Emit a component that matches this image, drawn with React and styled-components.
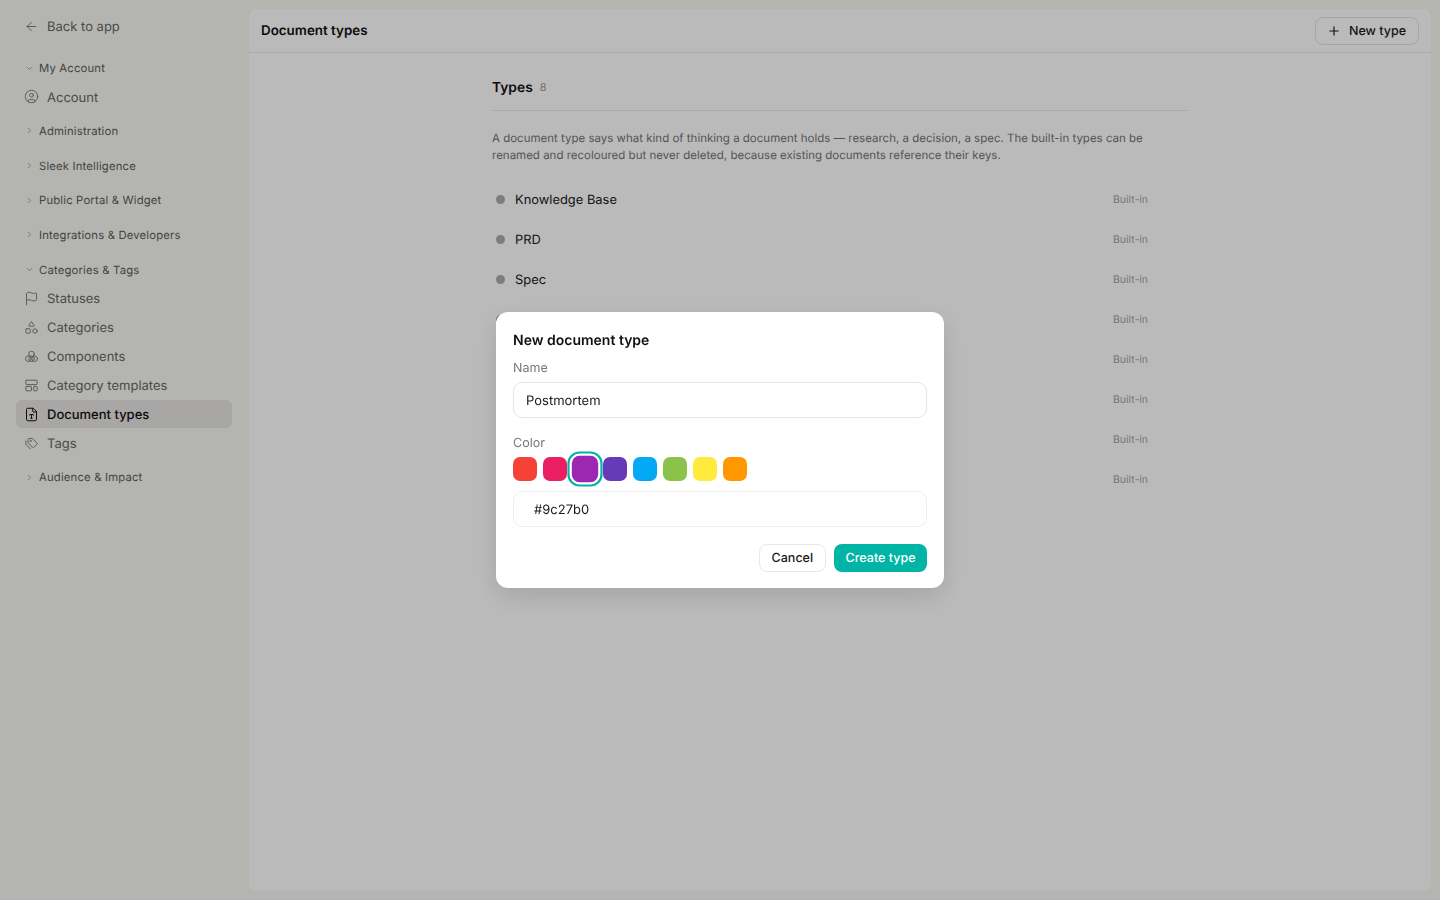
import React from 'react';
import styled, { createGlobalStyle } from 'styled-components';
import {
  ArrowLeft,
  ChevronDown,
  ChevronRight,
  CircleUser,
  FileType,
  Flag,
  Shapes,
  Plus,
} from 'lucide-react';

const GlobalStyle = createGlobalStyle`
  html, body {
    margin: 0;
    height: 100%;
    background: #f7f8f2;
    font-family: Inter, 'Liberation Sans', sans-serif;
  }
  * {
    box-sizing: border-box;
    text-rendering: geometricPrecision;
  }
`;

const Page = styled.div`
  display: flex;
  height: 900px;
  overflow: hidden;
  padding: 9px 9px 9px 0;
`;

const Sidebar = styled.aside`
  width: 249px;
  flex: none;
  padding: 3px 17px 0 16px;
  display: flex;
  flex-direction: column;
`;

const NavItem = styled.a`
  display: flex;
  align-items: center;
  height: 28px;
  margin-bottom: 1px;
  padding: 2px 8px 0;
  gap: 8px;
  border-radius: 6px;
  font-size: 13px;
  color: ${(p) => (p.$active ? '#111' : '#666767')};
  font-weight: ${(p) => (p.$active ? 500 : 400)};
  background: ${(p) => (p.$active ? '#e6e5e3' : 'transparent')};
  svg {
    width: 15px;
    height: 15px;
    flex: none;
    margin-top: -2px;
    stroke-width: 1.6;
    color: ${(p) => (p.$active ? '#111' : '#7f8080')};
  }
`;

const BackLink = styled(NavItem)`
  margin-bottom: 16.4px;
`;

const GroupHead = styled.div`
  display: flex;
  align-items: center;
  height: 24px;
  padding: 0 8px 0 9px;
  gap: 5px;
  font-size: 11.3px;
  font-weight: 400;
  letter-spacing: 0.17px;
  color: #5c5d5d;
  margin-top: ${(p) => p.$gap || 0}px;
  margin-bottom: 2.5px;
  svg {
    width: 9px;
    height: 9px;
    flex: none;
    stroke-width: 2;
    color: #8a8b8b;
  }
`;

const Main = styled.main`
  flex: 1;
  background: #ffffff;
  border-radius: 8px;
  display: flex;
  flex-direction: column;
`;

const Header = styled.header`
  height: 44px;
  flex: none;
  display: flex;
  align-items: center;
  justify-content: space-between;
  padding: 0 12px;
  border-bottom: 1px solid #ececec;
`;

const Title = styled.h1`
  margin: 0;
  font-size: 13.4px;
  font-weight: 600;
  color: #111;
`;

const OutlineButton = styled.button`
  display: inline-flex;
  align-items: center;
  height: 28px;
  padding: 2px 12px 0 11px;
  gap: 8px;
  font: 500 12.5px Inter, sans-serif;
  color: #1a1a1a;
  background: #fff;
  border: 1px solid #e4e4e4;
  border-radius: 8px;
  svg {
    width: 14px;
    height: 14px;
    margin-top: -2px;
  }
`;

const Content = styled.div`
  width: 696px;
  margin-left: 243px;
`;

const SectionHead = styled.div`
  display: flex;
  align-items: center;
  gap: 7px;
  height: 58px;
  padding-top: 11px;
  border-bottom: 1px solid #ececec;
`;

const SectionTitle = styled.h2`
  margin: 0;
  padding-top: 2px;
  font-size: 13.8px;
  font-weight: 600;
  color: #111;
`;

const Count = styled.span`
  font-size: 11px;
  color: #999;
`;

const Intro = styled.p`
  margin: 19px 0 15px;
  font-size: 11.5px;
  line-height: 17px;
  color: #747474;
`;

const TypeRow = styled.div`
  display: flex;
  align-items: center;
  height: 40px;
  padding: 0 40px 0 4px;
  gap: 10px;
`;

const Dot = styled.span`
  width: 9px;
  height: 9px;
  border-radius: 50%;
  background: #adadb2;
  flex: none;
`;

const TypeName = styled.span`
  flex: 1;
  padding-top: 2px;
  font-size: 12.9px;
  color: #1a1a1a;
`;

const BuiltIn = styled.span`
  font-size: 10.5px;
  color: #a3a3a3;
`;

const Overlay = styled.div`
  position: fixed;
  inset: 0;
  background: rgba(0, 0, 0, 0.27);
  display: flex;
  align-items: flex-start;
  justify-content: center;
  padding-top: 312px;
`;

const Dialog = styled.div`
  width: 448px;
  height: 276px;
  background: #fff;
  border-radius: 12px;
  padding: 20px 17px 16px;
  box-shadow: 0 8px 24px rgba(0, 0, 0, 0.12);
  display: flex;
  flex-direction: column;
`;

const DialogTitle = styled.h3`
  margin: 0 0 10px;
  font-size: 14px;
  line-height: 18px;
  font-weight: 600;
  color: #111;
`;

const FieldLabel = styled.label`
  display: block;
  padding-top: 1px;
  font-size: 12.5px;
  line-height: 16px;
  color: #777;
  margin-bottom: 5px;
`;

const TextField = styled.input`
  display: block;
  width: 100%;
  height: 36px;
  flex: none;
  padding: 2px ${(p) => (p.$hex ? 20 : 12)}px 0;
  font: 400 13px Inter, sans-serif;
  color: #1a1a1a;
  background: #fff;
  border: 1px solid ${(p) => (p.$hex ? '#efefef' : '#e5e5e5')};
  border-radius: 9px;
  outline: none;
  margin-bottom: 17px;
`;

const Swatches = styled.div`
  display: flex;
  gap: 6px;
  margin-bottom: 10px;
`;

const Swatch = styled.span`
  width: 24px;
  height: 24px;
  border-radius: 7px;
  background: ${(p) => p.$color};
  ${(p) =>
    p.$selected &&
    `transform: scale(1.1);
     outline: 2px solid #00b4a6;
     outline-offset: 2px;`}
`;

const Actions = styled.div`
  display: flex;
  justify-content: flex-end;
  gap: 8px;
`;

const DialogButton = styled.button`
  height: 28px;
  padding: 0 ${(p) => (p.$primary ? 11.5 : 12)}px;
  font: 500 12.5px Inter, sans-serif;
  border-radius: 8px;
  color: ${(p) => (p.$primary ? '#fff' : '#1a1a1a')};
  background: ${(p) => (p.$primary ? '#00b4a6' : '#fff')};
  border: ${(p) => (p.$primary ? 'none' : '1px solid #e8e8e8')};
`;

const CustomIcon = ({ children }) => (
  <svg viewBox="0 0 24 24" fill="none" stroke="currentColor" strokeLinecap="round" strokeLinejoin="round">
    {children}
  </svg>
);

const ComponentsIcon = () => (
  <CustomIcon>
    <circle cx="12" cy="8" r="4.5" />
    <circle cx="7" cy="15.5" r="4.5" />
    <circle cx="17" cy="15.5" r="4.5" />
    <circle cx="12" cy="15.5" r="4.5" />
  </CustomIcon>
);

const TemplatesIcon = () => (
  <CustomIcon>
    <rect x="3" y="3.5" width="18" height="7" rx="1" />
    <rect x="3" y="13.5" width="9" height="7" rx="1" />
    <rect x="15.5" y="13.5" width="5.5" height="7" rx="1" />
  </CustomIcon>
);

const TagsIcon = () => (
  <CustomIcon>
    <path d="M8.5 4h4.2a2 2 0 0 1 1.4.6l6.3 6.3a2 2 0 0 1 0 2.8l-4.2 4.2a2 2 0 0 1-2.8 0L7.1 11.6a2 2 0 0 1-.6-1.4V6a2 2 0 0 1 2-2z" />
    <path d="M3 8v4.5c0 .6.2 1.1.6 1.5l6.5 6.5" />
    <circle cx="10.5" cy="8" r=".8" />
  </CustomIcon>
);

const swatches = ['#f44336', '#e91e63', '#9c27b0', '#673ab7', '#03a9f4', '#8bc34a', '#ffeb3b', '#ff9800'];
// the last five names sit behind the dialog and can't be read in the picture
const types = ['Knowledge Base', 'PRD', 'Spec', '', '', '', '', ''];

const App = () => (
  <>
    <GlobalStyle />
    <Page>
      <Sidebar>
        <BackLink>
          <ArrowLeft />
          Back to app
        </BackLink>
        <GroupHead>
          <ChevronDown />
          My Account
        </GroupHead>
        <NavItem>
          <CircleUser />
          Account
        </NavItem>
        <GroupHead $gap={7.1}>
          <ChevronRight />
          Administration
        </GroupHead>
        <GroupHead $gap={8.17}>
          <ChevronRight />
          Sleek Intelligence
        </GroupHead>
        <GroupHead $gap={8.17}>
          <ChevronRight />
          Public Portal &amp; Widget
        </GroupHead>
        <GroupHead $gap={8.17}>
          <ChevronRight />
          Integrations &amp; Developers
        </GroupHead>
        <GroupHead $gap={8.17}>
          <ChevronDown />
          Categories &amp; Tags
        </GroupHead>
        <NavItem>
          <Flag />
          Statuses
        </NavItem>
        <NavItem>
          <Shapes />
          Categories
        </NavItem>
        <NavItem>
          <ComponentsIcon />
          Components
        </NavItem>
        <NavItem>
          <TemplatesIcon />
          Category templates
        </NavItem>
        <NavItem $active>
          <FileType />
          Document types
        </NavItem>
        <NavItem>
          <TagsIcon />
          Tags
        </NavItem>
        <GroupHead $gap={7.1}>
          <ChevronRight />
          Audience &amp; Impact
        </GroupHead>
      </Sidebar>
      <Main>
        <Header>
          <Title>Document types</Title>
          <OutlineButton>
            <Plus />
            New type
          </OutlineButton>
        </Header>
        <Content>
          <SectionHead>
            <SectionTitle>Types</SectionTitle>
            <Count>8</Count>
          </SectionHead>
          <Intro>
            A document type says what kind of thinking a document holds — research, a decision, a spec. The built-in
            types can be renamed and recoloured but never deleted, because existing documents reference their keys.
          </Intro>
          {types.map((name, i) => (
            <TypeRow key={i}>
              <Dot />
              <TypeName>{name}</TypeName>
              <BuiltIn>Built-in</BuiltIn>
            </TypeRow>
          ))}
        </Content>
      </Main>
    </Page>
    <Overlay>
      <Dialog>
        <DialogTitle>New document type</DialogTitle>
        <FieldLabel>Name</FieldLabel>
        <TextField defaultValue="Postmortem" />
        <FieldLabel>Color</FieldLabel>
        <Swatches>
          {swatches.map((c) => (
            <Swatch key={c} $color={c} $selected={c === '#9c27b0'} />
          ))}
        </Swatches>
        <TextField $hex defaultValue="#9c27b0" />
        <Actions>
          <DialogButton>Cancel</DialogButton>
          <DialogButton $primary>Create type</DialogButton>
        </Actions>
      </Dialog>
    </Overlay>
  </>
);

export default App;
